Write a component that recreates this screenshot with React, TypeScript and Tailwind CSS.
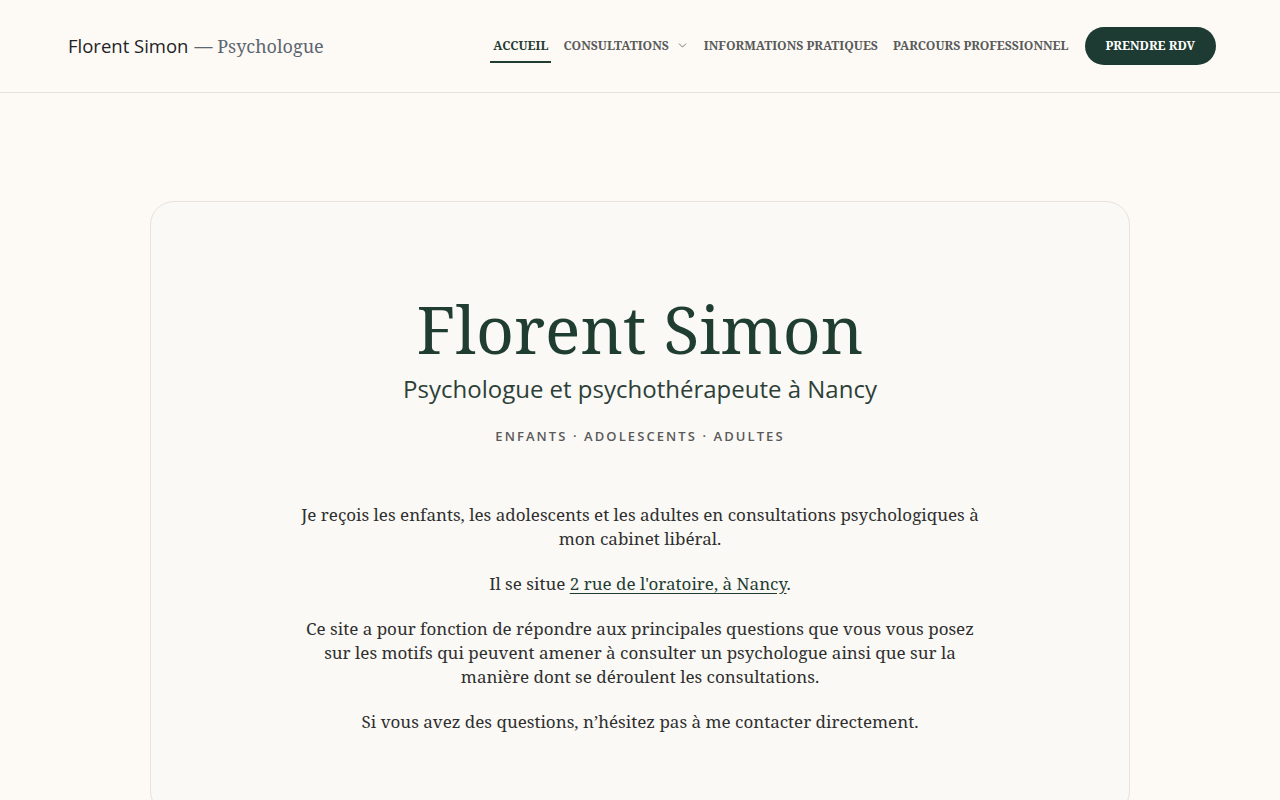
import { ChevronDown } from 'lucide-react';

const serif = "font-['Noto_Serif','DejaVu_Serif',serif]";
const sans = "font-['Open_Sans','Noto_Sans',sans-serif]";

export default function App() {
  return (
    <div className="min-h-screen bg-[#fdfaf6] text-[#2b2b2b]">
      <header className="h-[93px] border-b border-[#e6e2dc] pl-[68px] pr-[64px] flex items-center justify-between">
        <div className="flex items-baseline gap-[6px]">
          <span className={`${sans} text-[18.5px] font-medium text-[#1d2327]`}>Florent Simon</span>
          <span className={`${serif} text-[18px] text-[#5d6670]`}>— Psychologue</span>
        </div>
        <nav className={`${serif} flex items-center gap-[15px] text-[12.2px] font-bold uppercase text-[#5a5a5a]`}>
          <a className="-mr-[3px] pt-[8px] pb-[5px] px-[3px] text-[#1f3d33] border-b-2 border-[#1f3d33]">Accueil</a>
          <a className="flex items-center gap-[7px] py-2">
            Consultations
            <ChevronDown className="w-[13px] h-[13px]" strokeWidth={1.5} />
          </a>
          <a className="py-2">Informations pratiques</a>
          <a className="py-2">Parcours professionnel</a>
          <a className="ml-[1px] h-[38px] px-[21px] rounded-full bg-[#1d3b32] text-white flex items-center">Prendre RDV</a>
        </nav>
      </header>

      <main className="px-[150px] pt-[108px]">
        <section className="rounded-[24px] border border-[#e7e3dc] bg-[#faf9f5] pt-[86px] pb-[80px] flex flex-col items-center text-center">
          <h1 className={`${serif} text-[66px] leading-[80px] text-[#1f3d30]`}>Florent Simon</h1>
          <p className={`${sans} mt-[3px] text-[24px] text-[#2d3f38]`}>Psychologue et psychothérapeute à Nancy</p>
          <p className={`${sans} mt-[20px] text-[13px] tracking-[0.16em] font-semibold text-[#5a5a5a]`}>
            ENFANTS · ADOLESCENTS · ADULTES
          </p>
          <div className={`${serif} mt-[56px] w-[690px] text-[17px] leading-[24px] text-[#2f2f2f] flex flex-col gap-[21px]`}>
            <p>Je reçois les enfants, les adolescents et les adultes en consultations psychologiques à mon cabinet libéral.</p>
            <p>
              Il se situe <a className="underline underline-offset-[3px] decoration-[#1f3d33] text-[#1f3d33]">2 rue de l'oratoire, à Nancy</a>.
            </p>
            <p>
              Ce site a pour fonction de répondre aux principales questions que vous vous posez sur les motifs qui peuvent amener à consulter un psychologue ainsi que sur la manière dont se déroulent les consultations.
            </p>
            <p>Si vous avez des questions, n’hésitez pas à me contacter directement.</p>
          </div>
        </section>
      </main>
    </div>
  );
}
